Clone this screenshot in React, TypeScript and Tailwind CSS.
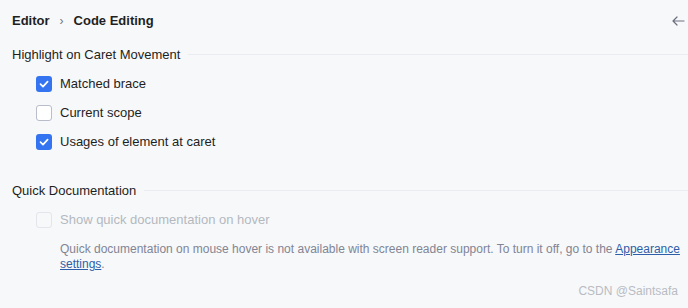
import React from 'react';

const font = { fontFamily: '"Liberation Sans", Arial, sans-serif' };

const Check = ({ checked, disabled }: { checked?: boolean; disabled?: boolean }) => {
  if (checked) {
    return (
      <span className="flex h-4 w-4 shrink-0 items-center justify-center rounded-[3px] bg-[#3574f0]">
        <svg width="12" height="12" viewBox="0 0 12 12" fill="none">
          <path d="M2.5 6.2 L5 8.6 L9.6 3.6" stroke="white" strokeWidth="1.7" strokeLinecap="round" strokeLinejoin="round" />
        </svg>
      </span>
    );
  }
  return (
    <span
      className={
        disabled
          ? 'h-4 w-4 shrink-0 rounded-[3px] border border-[#e3e5ea] bg-[#f7f8fa]'
          : 'h-4 w-4 shrink-0 rounded-[3px] border border-[#b9bdc9] bg-white'
      }
    />
  );
};

const Section = ({ title }: { title: string }) => (
  <div className="flex items-center gap-2 pl-3">
    <span className="text-[13px] text-[#1e1f22]">{title}</span>
    <div className="h-px flex-1 bg-[#ebecf0]" />
  </div>
);

const Option = ({ label, checked, disabled }: { label: string; checked?: boolean; disabled?: boolean }) => (
  <div className="flex h-[29px] items-center gap-2 pl-9">
    <Check checked={checked} disabled={disabled} />
    <span className={disabled ? 'text-[13px] text-[#b4b8bf]' : 'text-[13px] text-[#1e1f22]'}>{label}</span>
  </div>
);

export default function App() {
  return (
    <div className="relative h-[308px] w-[688px] overflow-hidden bg-[#f7f8fa]" style={font}>
      {/* breadcrumb header */}
      <header className="flex h-[42px] items-center justify-between pl-3 pr-[2px]">
        <div className="flex items-center gap-[10px] text-[13px] font-bold text-[#1e1f22]">
          <span>Editor</span>
          <span className="text-[12px] font-normal text-[#6c707e]">›</span>
          <span>Code Editing</span>
        </div>
        <svg width="16" height="16" viewBox="0 0 16 16" fill="none">
          <path d="M14 8H3M7 4L3 8l4 4" stroke="#6c707e" strokeWidth="1.2" strokeLinecap="round" strokeLinejoin="round" />
        </svg>
      </header>

      <div className="pt-[3px]">
        <Section title="Highlight on Caret Movement" />
        <div className="pt-[5px]">
          <Option label="Matched brace" checked />
          <Option label="Current scope" />
          <Option label="Usages of element at caret" checked />
        </div>
      </div>

      <div className="pt-[24px]">
        <Section title="Quick Documentation" />
        <div className="pt-[5px]">
          <Option label="Show quick documentation on hover" disabled />
          <p className="pl-[60px] pr-2 pt-[8px] text-[12px] leading-[15px] text-[#818594]">
            Quick documentation on mouse hover is not available with screen reader support. To turn it off, go to the{' '}
            <span className="text-[#2f5ea8] underline">Appearance settings</span>.
          </p>
        </div>
      </div>

      <div className="pt-[31px]">
        <Section title="Refactorings" />
      </div>

      <span className="absolute bottom-[8px] right-[10px] text-[12px] text-[#b9bcc2]">CSDN @Saintsafa</span>
    </div>
  );
}
